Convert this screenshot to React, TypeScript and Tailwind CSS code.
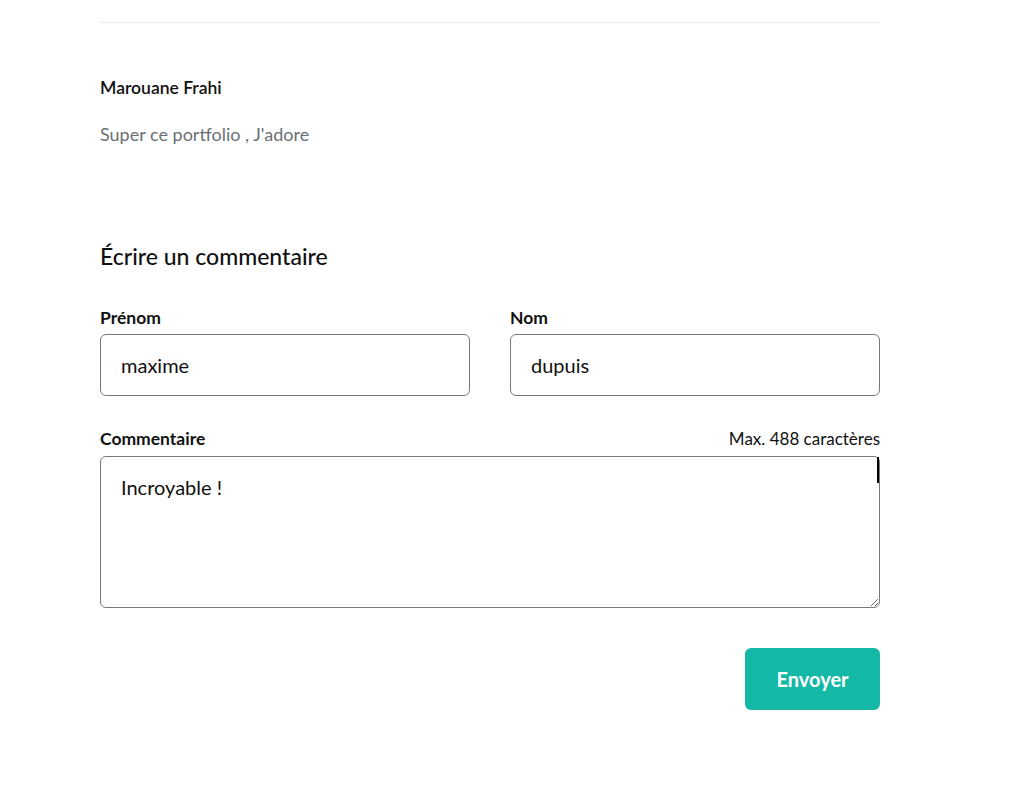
import { useState } from 'react'

export default function App() {
  const [prenom, setPrenom] = useState('maxime')
  const [nom, setNom] = useState('dupuis')
  const [commentaire, setCommentaire] = useState('Incroyable !')

  return (
    <main className="min-h-screen w-full bg-white font-['Lato',sans-serif] text-[#111]">
      <div className="ml-[100px] w-[780px]">
        <div className="pt-[22px] border-b border-[#e8e8e8]" />

        {/* existing comment */}
        <div className="pt-[55px]">
          <p className="text-[17.5px] font-semibold leading-[20px] text-[#111]">Marouane Frahi</p>
          <p className="mt-[25px] text-[18px] leading-[22px] text-[#6b7075]">Super ce portfolio , J'adore</p>
        </div>

        {/* form */}
        <div className="pt-[97px]">
          <h2 className="text-[23px] font-medium leading-[28px]">Écrire un commentaire</h2>

          <div className="mt-[38px] grid grid-cols-2 gap-10">
            <label className="flex flex-col">
              <span className="text-[17.5px] font-bold leading-[20px]">Prénom</span>
              <input
                value={prenom}
                onChange={(e) => setPrenom(e.target.value)}
                className="mt-[6px] h-[62px] rounded-[6px] border border-[#76797c] px-5 text-[20px] outline-none"
              />
            </label>
            <label className="flex flex-col">
              <span className="text-[17.5px] font-bold leading-[20px]">Nom</span>
              <input
                value={nom}
                onChange={(e) => setNom(e.target.value)}
                className="mt-[6px] h-[62px] rounded-[6px] border border-[#76797c] px-5 text-[20px] outline-none"
              />
            </label>
          </div>

          <div className="mt-[33px]">
            <div className="flex items-baseline justify-between">
              <span className="text-[17.5px] font-bold leading-[20px]">Commentaire</span>
              <span className="text-[17px] leading-[20px]">Max. 488 caractères</span>
            </div>
            <div className="relative mt-[7px]">
              <textarea
                value={commentaire}
                onChange={(e) => setCommentaire(e.target.value)}
                className="block h-[152px] w-full rounded-[6px] border border-[#76797c] px-5 py-[18px] text-[20px] leading-[24px] outline-none"
              />
              <div className="absolute right-[1px] top-[1px] h-[26px] w-[2px] bg-black" />
            </div>
          </div>

          <div className="mt-[40px] flex justify-end">
            <button
              type="button"
              className="h-[62px] w-[135px] rounded-[6px] bg-[#14b8a6] text-[20px] font-bold text-white"
            >
              Envoyer
            </button>
          </div>
        </div>
      </div>
    </main>
  )
}
